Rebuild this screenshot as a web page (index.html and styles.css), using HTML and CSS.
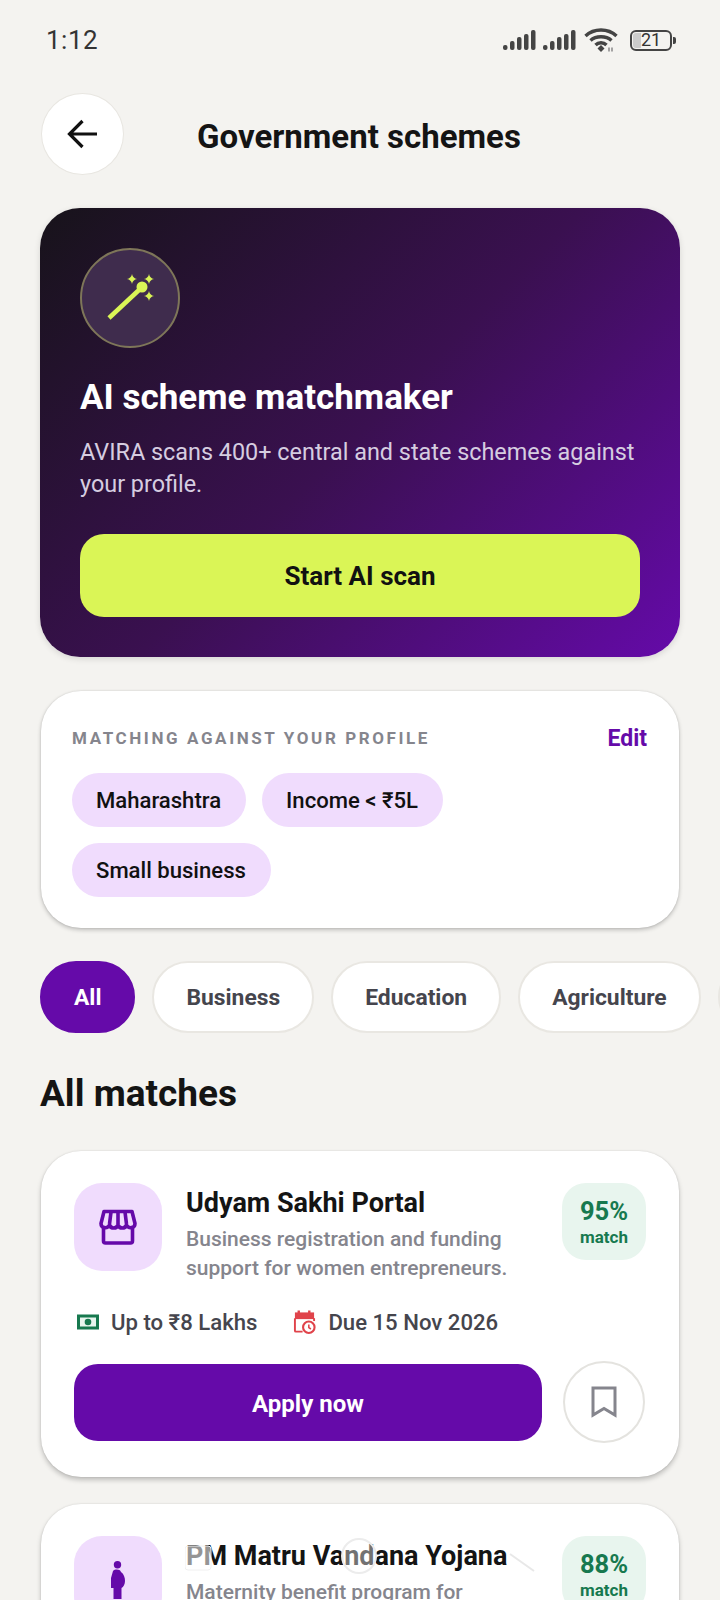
FILE: index.html
```html
<!DOCTYPE html>
<html lang="en">
<head>
<meta charset="utf-8">
<title>Government schemes</title>
<link rel="stylesheet" href="styles.css">
</head>
<body>
<div class="screen">
  <div class="status">
    <span class="time">1:12</span>
    <div class="status-icons">
      <svg class="sig" width="34" height="22" viewBox="0 0 34 22"><g fill="#444"><rect x="0" y="16" width="4.500" height="5" rx="2"/><rect x="7" y="12" width="4.500" height="9" rx="2"/><rect x="14" y="8" width="4.500" height="13" rx="2"/><rect x="21" y="5" width="4.500" height="16" rx="2"/><rect x="28" y="1" width="4.500" height="20" rx="2"/></g></svg>
      <svg class="sig" width="33" height="22" viewBox="0 0 33 22"><g fill="#444"><rect x="0" y="16" width="4.500" height="5" rx="2"/><rect x="7" y="12" width="4.500" height="9" rx="2"/><rect x="14" y="8" width="4.500" height="13" rx="2"/><rect x="21" y="5" width="4.500" height="16" rx="2"/><rect x="28" y="1" width="4.500" height="20" rx="2"/></g></svg>
      <svg class="wifi" width="34" height="24" viewBox="0 0 34 24"><g fill="none" stroke="#444" stroke-width="3.400"><path d="M1.500 8C10 0 24 0 32.500 8"/><path d="M6.500 12.500C12 7.500 22 7.500 27.500 12.500"/><path d="M11.500 17C14.500 14 19.500 14 22.500 17"/></g><path d="M13.500 20.500 17 17l3.500 3.500L17 24z" fill="#444"/><path d="M25 23.500v-4M28 23.500v-4" stroke="#888" stroke-width="1.500"/></svg>
      <div class="battery"><span class="battery-level"></span><span class="battery-num">21</span><span class="battery-cap"></span></div>
    </div>
  </div>

  <header class="top">
    <button class="back" aria-label="Back">
      <svg width="34" height="34" viewBox="0 0 34 34"><path d="M31 17H4M16.500 4 3.500 17l13 13" fill="none" stroke="#111" stroke-width="3.200"/></svg>
    </button>
    <h1 class="page-title">Government schemes</h1>
  </header>

  <section class="hero">
    <div class="hero-icon">
      <svg width="54" height="54" viewBox="0 0 54 54"><path d="M6 47 36 19" stroke="#daf556" stroke-width="4.500" fill="none"/><circle cx="39" cy="16" r="5.500" fill="#daf556"/><g fill="#daf556"><path d="M29 3q.8 4.200 5 5-4.200.8-5 5-.8-4.200-5-5 4.200-.8 5-5z"/><path d="M46 3q.8 4.200 5 5-4.200.8-5 5-.8-4.200-5-5 4.200-.8 5-5z"/><path d="M46 20q.8 4.200 5 5-4.200.8-5 5-.8-4.200-5-5 4.200-.8 5-5z"/></g></svg>
    </div>
    <h2 class="hero-title">AI scheme matchmaker</h2>
    <p class="hero-text">AVIRA scans 400+ central and state schemes against your profile.</p>
    <button class="scan">Start AI scan</button>
  </section>

  <section class="profile">
    <div class="profile-head">
      <span class="profile-label">MATCHING AGAINST YOUR PROFILE</span>
      <span class="edit">Edit</span>
    </div>
    <div class="chips">
      <span class="chip">Maharashtra</span>
      <span class="chip">Income &lt; ₹5L</span>
      <span class="chip">Small business</span>
    </div>
  </section>

  <nav class="filters">
    <span class="filter active">All</span>
    <span class="filter">Business</span>
    <span class="filter">Education</span>
    <span class="filter">Agriculture</span>
    <span class="filter">Health</span>
  </nav>

  <h2 class="section-title">All matches</h2>

  <article class="card">
    <div class="card-top">
      <div class="card-icon">
        <svg width="38" height="36" viewBox="0 0 38 36"><g fill="none" stroke="#650aa9" stroke-width="3.600" stroke-linejoin="round"><path d="M5 2.500h28l3 12c0 5-6.500 5.500-8.500 1.500-1.500 4-7 4-8.500 0-1.500 4-7 4-8.500 0-2 4-8.500 3.500-8.500-1.500z"/><path d="M4.500 19v13a2 2 0 0 0 2 2h25a2 2 0 0 0 2-2V19"/><path d="M12 3 10.500 15M19 3v12M26 3l1.500 12"/></g></svg>
      </div>
      <div class="card-body">
        <h3 class="card-title">Udyam Sakhi Portal</h3>
        <p class="card-desc">Business registration and funding support for women entrepreneurs.</p>
      </div>
      <div class="match"><span class="match-num">95%</span><span class="match-word">match</span></div>
    </div>
    <div class="meta">
      <span class="meta-item">
        <svg width="22" height="16" viewBox="0 0 22 16"><rect width="22" height="15" y="0.500" fill="#17794f"/><rect x="3" y="3.500" width="16" height="9" fill="#e8f5ee"/><circle cx="11" cy="8" r="3.300" fill="#17794f"/></svg>
        Up to ₹8 Lakhs
      </span>
      <span class="meta-item">
        <svg width="23" height="26" viewBox="0 0 24 26"><path d="M6 1v4M17 1v4" stroke="#e0434a" stroke-width="2.500"/><path d="M2 3h20v7H2z" fill="#e0434a"/><path d="M10 23H3a1 1 0 0 1-1-1V9" fill="none" stroke="#e0434a" stroke-width="2"/><path d="M22 9v3" stroke="#e0434a" stroke-width="2"/><circle cx="16.500" cy="18.500" r="6" fill="#fff" stroke="#e0434a" stroke-width="2.200"/><path d="M16.500 15.500v3.300l2.200 1.500" fill="none" stroke="#e0434a" stroke-width="1.600"/></svg>
        Due 15 Nov 2026
      </span>
    </div>
    <div class="actions">
      <button class="apply">Apply now</button>
      <button class="save" aria-label="Save">
        <svg width="26" height="32" viewBox="0 0 26 32"><path d="M2 2h22v27L13 22.500 2 29z" fill="none" stroke="#85858d" stroke-width="3"/></svg>
      </button>
    </div>
  </article>

  <article class="card card-next">
    <div class="card-top">
      <div class="card-icon">
        <svg width="16" height="38" viewBox="0 0 16 38"><g fill="#650aa9"><circle cx="7.500" cy="3.800" r="3.700"/><path d="M3 10c2-2 7-2 8 1 3 2 4 6 4 9 0 3-1.500 6-3.500 7v11h-8V27H1V17z"/></g></svg>
      </div>
      <div class="card-body">
        <h3 class="card-title">PM Matru Vandana Yojana</h3>
        <p class="card-desc">Maternity benefit program for pregnant and lactating mothers.</p>
      </div>
      <div class="match"><span class="match-num">88%</span><span class="match-word">match</span></div>
    </div>
    <svg class="ghost" width="360" height="50" viewBox="0 0 360 50"><rect x="0" y="10" width="26" height="24" rx="3" fill="#fff" fill-opacity=".55" stroke="#f0f0f0"/><circle cx="174" cy="20" r="17" fill="#fff" fill-opacity=".4" stroke="#ececec" stroke-width="2"/><path d="M325 18 349 35" stroke="#e8e8e8" stroke-width="2"/></svg>
  </article>
</div>
</body>
</html>
```

FILE: styles.css
```css
* { box-sizing: border-box; }
html, body { margin: 0; padding: 0; }
body {
  width: 720px;
  height: 1600px;
  overflow: hidden;
  background: #f4f3f0;
  font-family: Roboto, "Noto Sans", sans-serif;
  color: #111;
}
button { font-family: inherit; border: 0; padding: 0; }
h1, h2, h3, p { margin: 0; }
.screen { padding: 0 0 0 40px; width: 720px; }

.status { display: flex; justify-content: space-between; align-items: center; height: 78px; padding: 2px 42px 0 6px; }
.time { font-size: 26px; color: #333; letter-spacing: 0.5px; }
.status-icons { display: flex; align-items: center; gap: 6px; }
.wifi { margin-left: 2px; }
.battery { position: relative; width: 42px; height: 21px; border: 2px solid #444; border-radius: 6px; margin-left: 6px; margin-right: 6px; display: flex; align-items: center; justify-content: center; }
.battery-level { position: absolute; left: 1px; top: 1px; bottom: 1px; width: 8px; background: #ccc; border-radius: 3px 0 0 3px; }
.battery-num { position: relative; font-size: 18px; color: #333; line-height: 1; }
.battery-cap { position: absolute; right: -6px; top: 5px; width: 3px; height: 7px; background: #444; border-radius: 0 2px 2px 0; }

.top { display: flex; align-items: center; height: 82px; margin-top: 15px; gap: 73px; }
.back { width: 83px; height: 82px; border-radius: 50%; background: #fff; border: 1px solid #e8e6e1; display: flex; align-items: center; justify-content: center; margin-left: 1px; }
.page-title { font-size: 33px; font-weight: 700; line-height: 1; color: #141414; margin-top: 4px; }

.hero {
  width: 640px;
  height: 449px;
  margin-top: 33px;
  border-radius: 40px;
  padding: 40px;
  background: linear-gradient(135deg, #17131a 0%, #3a1050 50%, #650aa9 100%);
  box-shadow: 0 2px 6px rgba(0,0,0,.12);
  display: flex;
  flex-direction: column;
}
.hero-icon { width: 100px; height: 100px; border-radius: 50%; background: #3f2c4d; border: 2px solid #7e7659; display: flex; align-items: center; justify-content: center; }
.hero-title { font-size: 35px; font-weight: 700; line-height: 40px; color: #fff; margin-top: 30px; }
.hero-text { font-size: 23.400px; line-height: 32px; color: #d6cde0; margin-top: 18px; }
.scan { margin-top: 34px; height: 83px; border-radius: 24px; background: #daf556; color: #111; font-size: 26px; font-weight: 700; }

.profile {
  width: 638px;
  height: 237px;
  margin-top: 34px;
  margin-left: 1px;
  border-radius: 40px;
  background: #fff;
  padding: 31px 32px 30px 31px;
  box-shadow: 0 2px 4px rgba(0,0,0,.22), 0 0 2px rgba(0,0,0,.12);
}
.profile-head { display: flex; justify-content: space-between; align-items: center; height: 32px; }
.profile-label { font-size: 17px; font-weight: 700; letter-spacing: 2.600px; color: #85858d; }
.edit { font-size: 23px; font-weight: 700; color: #650aa9; }
.chips { display: flex; flex-wrap: wrap; gap: 16px; margin-top: 19px; }
.chip { height: 54px; padding: 0 25px 0 24px; border-radius: 27px; background: #f0dcfd; font-size: 22.100px; font-weight: 500; display: flex; align-items: center; }

.filters { display: flex; gap: 17px; margin-top: 33px; white-space: nowrap; }
.filter { flex: none; height: 72px; padding: 0 32px; border-radius: 36px; background: #fff; border: 2px solid #e9e7e2; color: #45454d; font-size: 22.850px; font-weight: 700; display: flex; align-items: center; }
.filter.active { background: #650aa9; border-color: #650aa9; color: #fff; }

.section-title { font-size: 37px; font-weight: 700; line-height: 44px; margin-top: 39px; color: #141414; }

.card {
  position: relative;
  width: 638px;
  margin-left: 1px;
  margin-top: 35px;
  border-radius: 40px;
  background: #fff;
  padding: 32px 33px 34px;
  box-shadow: 0 3px 5px rgba(0,0,0,.22), 0 0 2px rgba(0,0,0,.12);
}
.card-next { margin-top: 27px; }
.ghost { position: absolute; left: 144px; top: 32px; }
.card-top { display: flex; align-items: flex-start; }
.card-icon { flex: none; width: 88px; height: 88px; border-radius: 28px; background: #f0dcfd; display: flex; align-items: center; justify-content: center; }
.card-body { flex: 1; padding-left: 24px; min-width: 0; }
.card-title { font-size: 27px; font-weight: 700; line-height: 40px; color: #141414; }
.card-desc { font-size: 21px; font-weight: 500; line-height: 29px; color: #85858d; margin-top: 2px; width: 330px; }
.match { flex: none; width: 84px; height: 77px; border-radius: 24px; background: #e8f5ee; color: #17794f; display: flex; flex-direction: column; align-items: center; justify-content: center; font-weight: 700; }
.match-num { font-size: 25.500px; line-height: 30px; }
.match-word { font-size: 17px; line-height: 22px; }
.meta { display: flex; gap: 33px; margin-top: 24px; height: 30px; align-items: center; }
.meta-item { display: flex; align-items: center; gap: 12px; font-size: 22.150px; font-weight: 500; color: #45454d; padding-left: 3px; }
.actions { display: flex; align-items: flex-start; justify-content: space-between; margin-top: 24px; }
.apply { width: 468px; height: 77px; margin-top: 3px; padding-top: 3px; border-radius: 24px; background: #650aa9; color: #fff; font-size: 24px; font-weight: 700; }
.save { width: 82px; height: 82px; margin-right: 1px; border-radius: 50%; background: #fff; border: 2px solid #e4e3df; display: flex; align-items: center; justify-content: center; }
```
